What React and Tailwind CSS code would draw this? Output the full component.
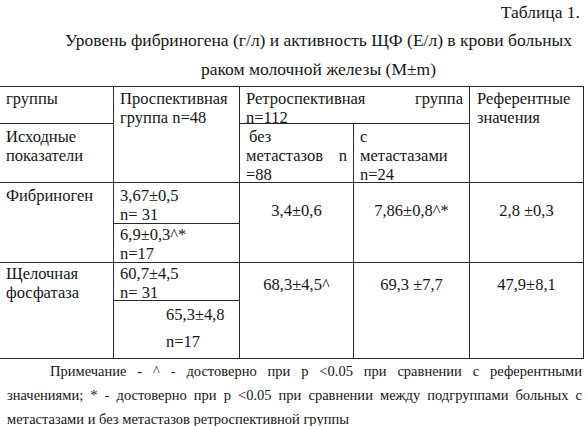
function Cell({ className = '', children }) {
  return <div className={`border-r border-b border-[#2b2b2b] ${className}`}>{children}</div>
}

export default function App() {
  return (
    <div className="w-[587px] h-[426px] bg-white text-[#161616] overflow-hidden font-['Liberation_Serif']">
      {/* Heading */}
      <div className="text-[17.5px]">
        <div className="h-[24px] leading-[24px] text-right pr-[7px]">Таблица 1.</div>
        <div className="mt-[4px] leading-[24px] text-center pl-[50px]">
          Уровень фибриногена (г/л) и активность ЩФ (Е/л) в крови больных
        </div>
        <div className="mt-[5px] leading-[24px] text-center pl-[50px]">раком молочной железы (M±m)</div>
      </div>

      {/* Table */}
      <div className="mt-[5px] w-[584px] border-t border-[#2b2b2b] grid grid-cols-[114px_126px_114px_116px_114px] grid-rows-[37px_59px_41px_39px_38px_58px] text-[16.5px] leading-[19px]">
        <Cell className="col-start-1 row-start-1 px-[6px] pt-[2px]">группы</Cell>
        <Cell className="col-start-1 row-start-2 px-[6px] pt-[3px]">
          <div>Исходные</div>
          <div>показатели</div>
        </Cell>
        <Cell className="col-start-2 row-start-1 row-span-2 px-[6px] pt-[2px]">
          <div>Проспективная</div>
          <div>группа n=48</div>
        </Cell>
        <Cell className="col-start-3 col-span-2 row-start-1 px-[6px] pt-[2px]">
          <div className="flex justify-between">
            <span>Ретроспективная</span>
            <span>группа</span>
          </div>
          <div>n=112</div>
        </Cell>
        <Cell className="col-start-3 row-start-2 px-[6px] pt-[3px]">
          <div className="pl-[3px]">без</div>
          <div className="flex justify-between">
            <span>метастазов</span>
            <span>n</span>
          </div>
          <div>=88</div>
        </Cell>
        <Cell className="col-start-4 row-start-2 px-[6px] pt-[3px]">
          <div>с</div>
          <div>метастазами</div>
          <div>n=24</div>
        </Cell>
        <Cell className="col-start-5 row-start-1 row-span-2 px-[7px] pt-[2px]">
          <div>Референтные</div>
          <div>значения</div>
        </Cell>

        {/* Фибриноген */}
        <Cell className="col-start-1 row-start-3 row-span-2 px-[6px] pt-[3px]">Фибриноген</Cell>
        <Cell className="col-start-2 row-start-3 px-[6px] pt-[3px]">
          <div>3,67±0,5</div>
          <div>n= 31</div>
        </Cell>
        <Cell className="col-start-2 row-start-4 px-[6px] pt-[1px]">
          <div>6,9±0,3^*</div>
          <div>n=17</div>
        </Cell>
        <Cell className="col-start-3 row-start-3 row-span-2 text-center pt-[18px]">3,4±0,6</Cell>
        <Cell className="col-start-4 row-start-3 row-span-2 text-center pt-[18px]">7,86±0,8^*</Cell>
        <Cell className="col-start-5 row-start-3 row-span-2 text-center pt-[18px]">2,8 ±0,3</Cell>

        {/* Щелочная фосфатаза */}
        <Cell className="col-start-1 row-start-5 row-span-2 px-[6px] pt-[1px]">
          <div>Щелочная</div>
          <div>фосфатаза</div>
        </Cell>
        <Cell className="col-start-2 row-start-5 px-[6px] pt-[1px]">
          <div>60,7±4,5</div>
          <div>n= 31</div>
        </Cell>
        <Cell className="col-start-2 row-start-6 pl-[52px] leading-[27px]">
          <div>65,3±4,8</div>
          <div>n=17</div>
        </Cell>
        <Cell className="col-start-3 row-start-5 row-span-2 text-center pt-[12px]">68,3±4,5^</Cell>
        <Cell className="col-start-4 row-start-5 row-span-2 text-center pt-[12px]">69,3 ±7,7</Cell>
        <Cell className="col-start-5 row-start-5 row-span-2 text-center pt-[12px]">47,9±8,1</Cell>
      </div>

      {/* Note */}
      <div className="pl-[7px] pr-[5px] text-[14.5px] leading-[24px]">
        <div className="pl-[43px] text-justify [text-align-last:justify]">
          Примечание - ^ - достоверно при р &lt;0.05 при сравнении с референтными
        </div>
        <div className="text-justify [text-align-last:justify]">
          значениями; * - достоверно при р &lt;0.05 при сравнении между подгруппами больных с
        </div>
        <div>метастазами и без метастазов ретроспективной группы</div>
      </div>
    </div>
  )
}
